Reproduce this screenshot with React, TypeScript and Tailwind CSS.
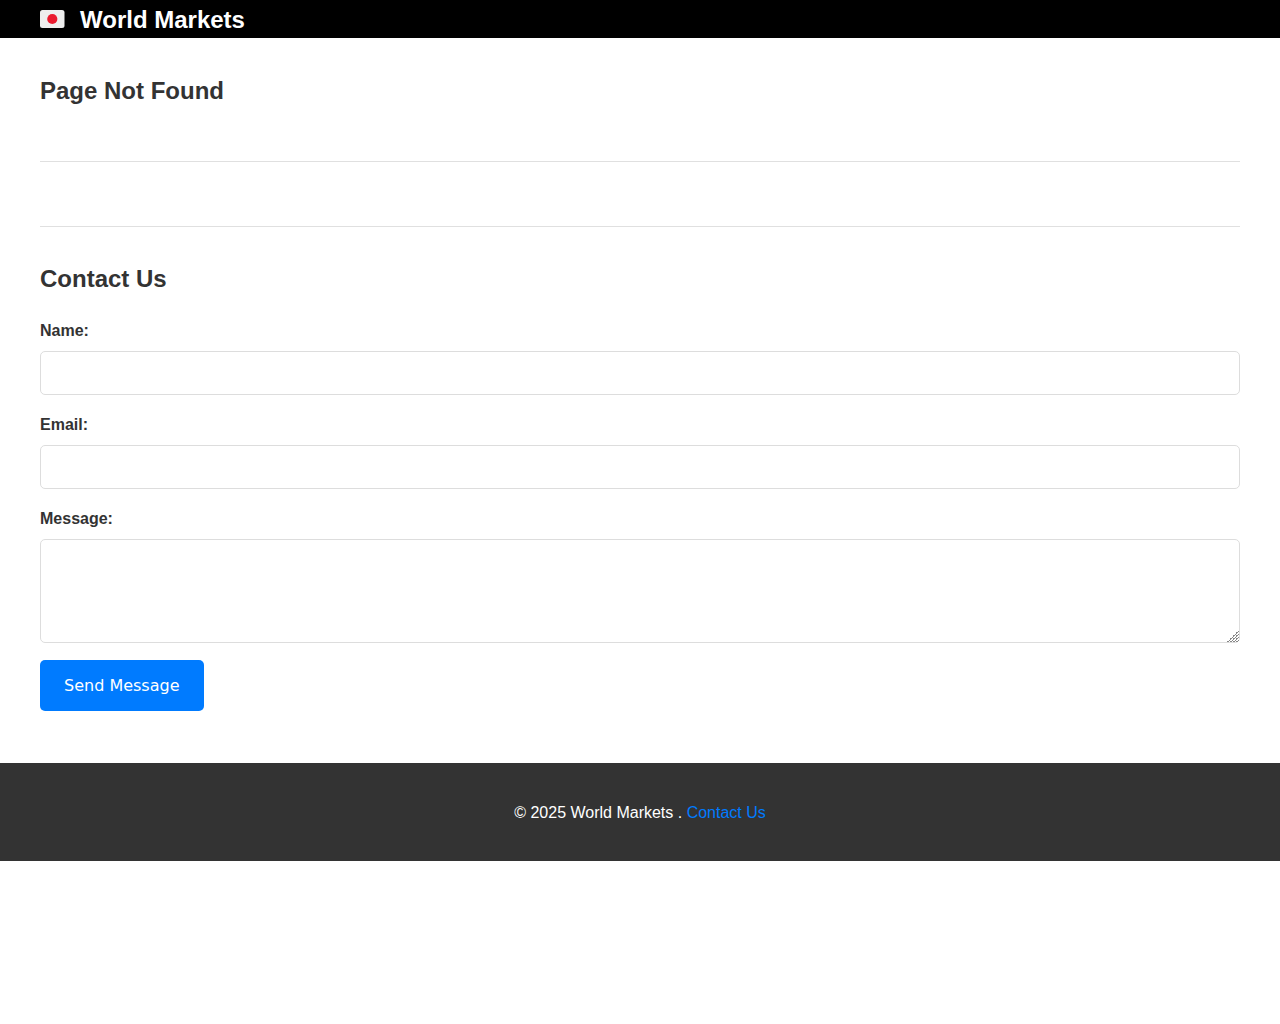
import type { InputHTMLAttributes } from "react"

const labelClass = "mb-[7px] block leading-[26px] font-bold"
const fieldClass = "block w-full rounded-[5px] border border-[#ddd] bg-white px-3 text-base text-[#333]"

function FlagLogo() {
  return (
    <svg viewBox="0 0 25 20" className="h-5 w-[25px]" aria-hidden="true">
      <rect width="24.5" height="18" rx="2.5" fill="#eeeeee" />
      <circle cx="12.3" cy="9" r="5.1" fill="#ea1b2f" />
    </svg>
  )
}

interface FieldProps extends InputHTMLAttributes<HTMLInputElement> {
  id: string
  label: string
}

function Field({ id, label, ...props }: FieldProps) {
  return (
    <div className="mb-[17px]">
      <label htmlFor={id} className={labelClass}>{label}</label>
      <input id={id} name={id} className={`${fieldClass} h-11`} {...props} />
    </div>
  )
}

export default function App() {
  return (
    <div className="bg-white font-['Liberation_Sans',Arial,sans-serif] text-base text-[#333]">
      <header className="bg-black px-10 text-white">
        <a href="#" className="flex h-[38px] items-center gap-[15px] pt-0.5">
          <FlagLogo />
          <span className="text-2xl font-bold">World Markets</span>
        </a>
      </header>

      <main className="px-10 pb-[52px]">
        <h1 className="pt-[34px] text-2xl leading-[38px] font-bold">Page Not Found</h1>
        <hr className="mt-[51px] border-[#e0e0e0]" />
        <hr className="mt-16 border-[#e0e0e0]" />

        <section id="contact">
          <h2 className="mt-[33px] text-2xl leading-[38px] font-bold">Contact Us</h2>
          <form className="mt-5" onSubmit={(e) => e.preventDefault()}>
            <Field id="name" label="Name:" type="text" required />
            <Field id="email" label="Email:" type="email" required />
            <div className="mb-[17px]">
              <label htmlFor="message" className={labelClass}>Message:</label>
              <textarea
                id="message"
                name="message"
                className={`${fieldClass} h-[104px] resize py-3 [&::-webkit-resizer]:bg-[linear-gradient(135deg,#fff_58%,transparent_58%_96%,#fff_96%),repeating-linear-gradient(135deg,#888_0_5%,#fff_5%_10%)]`}
                required
              />
            </div>
            <button
              type="submit"
              className="rounded-[5px] bg-[#007bff] px-6 py-3 font-['DejaVu_Sans',sans-serif] text-base leading-[27px] text-white"
            >
              Send Message
            </button>
          </form>
        </section>
      </main>

      <footer className="bg-[#333] pt-[37px] pb-[35px] text-center leading-[26px] text-white">
        <p>
          © 2025 World Markets . <a href="#contact" className="text-[#007bff]">Contact Us</a>
        </p>
      </footer>
    </div>
  )
}
